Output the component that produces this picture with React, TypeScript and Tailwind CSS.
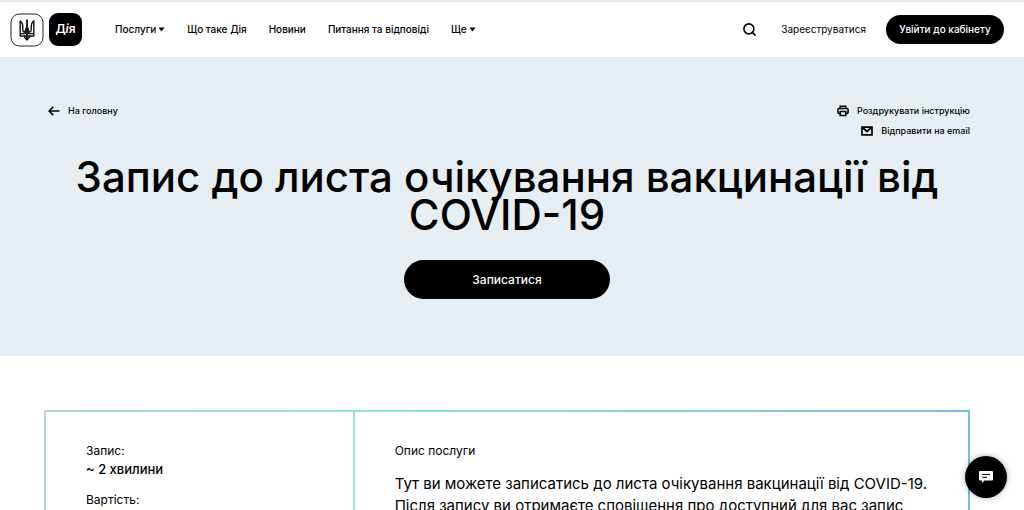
import { Search } from "lucide-react"

type NavItem = {
  label: string
  hasMenu?: boolean
}

const navItems: NavItem[] = [
  { label: "Послуги", hasMenu: true },
  { label: "Що таке Дія" },
  { label: "Новини" },
  { label: "Питання та відповіді" },
  { label: "Ще", hasMenu: true },
]

function Caret() {
  return (
    <svg width="7" height="5" viewBox="0 0 7 5" fill="currentColor" aria-hidden="true">
      <path d="M0.4 0.4h6.2L3.5 4.6z" />
    </svg>
  )
}

function TridentLogo() {
  return (
    <svg className="size-8.5" viewBox="0 0 34 34" fill="none" aria-hidden="true">
      <rect x="1" y="1" width="32" height="32" rx="8.5" stroke="#222" strokeWidth="1" />
      <g stroke="#111" strokeWidth="1.4" strokeLinejoin="round">
        <path d="M10.2 7.8v15.200h3.800c.4 1.600 1.500 2.400 3 4 1.500-1.600 2.600-2.400 3-4h3.800V7.800c-2 1.700-2.700 3.900-2.600 6.700.1 2.200.3 3.700-.7 4.300" />
        <path d="M10.200 7.800c2 1.700 2.700 3.900 2.600 6.700-.1 2.200-.3 3.700.7 4.300 1.600.2 2.300-1.500 2.600-4.300M20.500 18.800c-1.600.2-2.300-1.500-2.600-4.300" />
        <path d="M10.200 20.600h13.600M14 23h6M14.200 20.600c.6-1.200 2.200-1.700 2.800-3.400.6 1.700 2.200 2.200 2.800 3.400" />
        <path d="M17 6.500V27" strokeWidth="1.800" />
      </g>
    </svg>
  )
}

function BackIcon() {
  return (
    <svg width="12" height="10" viewBox="0 0 12 10" fill="none" stroke="#000" strokeWidth="1.500" aria-hidden="true">
      <path d="M11.500 5H1.200M5.200 0.900L1.100 5l4.100 4.100" />
    </svg>
  )
}

function PrinterIcon() {
  return (
    <svg width="12" height="12" viewBox="0 0 12 12" fill="none" stroke="#000" strokeWidth="1.500" aria-hidden="true">
      <path d="M3.200 3.300V1.200h5.600v2.100M3.200 8.500H1.800L.9 7.600V4.300l.9-.9h8.400l.9.900v3.300l-.9.900H8.800" />
      <path d="M3.200 6.600h5.600v3.900H3.200z" />
    </svg>
  )
}

function MailIcon() {
  return (
    <svg width="12" height="10" viewBox="0 0 12 10" fill="none" stroke="#000" strokeWidth="1.700" aria-hidden="true">
      <path d="M1 1.100h10v7.800H1z" />
      <path d="M1.500 1.500L6 5.500l4.500-4" />
    </svg>
  )
}

function Header() {
  return (
    <header className="flex h-[57px] shrink-0 items-center border-t-2 border-[#e4e5e6] bg-white pr-5 pl-2.5">
      <a href="#" aria-label="Дія" className="flex items-center gap-[5px]">
        <TridentLogo />
        <span className="flex size-[33px] items-center justify-center rounded-[9px] bg-black pb-0.5 text-xs font-semibold text-white">
          <span>
            Д<i>і</i>я
          </span>
        </span>
      </a>

      <nav className="ml-[33px] flex items-center gap-[22px] font-medium">
        {navItems.map(({ label, hasMenu }) =>
          hasMenu ? (
            <button key={label} type="button" className="flex items-center gap-0.5">
              {label}
              <Caret />
            </button>
          ) : (
            <a key={label} href="#">
              {label}
            </a>
          )
        )}
      </nav>

      <div className="ml-auto flex items-center">
        <button type="button" aria-label="Пошук">
          <Search size={15} strokeWidth={2.500} />
        </button>
        <a href="#" className="ml-6">
          Зареєструватися
        </a>
        <a
          href="#"
          className="ml-5 flex h-[29px] w-[118px] items-center justify-center rounded-full bg-black font-medium text-white"
        >
          Увійти до кабінету
        </a>
      </div>
    </header>
  )
}

function Hero() {
  return (
    <section className="shrink-0 bg-[#e6edf3] pt-[46px] pr-[54px] pb-[57px] pl-11">
      <div className="flex items-start justify-between text-[9px] leading-4 font-medium">
        <a href="#" className="flex items-center gap-2 pl-1">
          <BackIcon />
          На головну
        </a>
        <div className="flex flex-col items-end gap-1">
          <button type="button" className="flex items-center gap-2">
            <PrinterIcon />
            Роздрукувати інструкцію
          </button>
          <button type="button" className="flex items-center gap-2">
            <MailIcon />
            Відправити на email
          </button>
        </div>
      </div>

      <h1 className="mt-[19px] text-center text-[42px] leading-[38px] font-medium">
        Запис до листа очікування вакцинації від COVID-19
      </h1>

      <button
        type="button"
        className="mx-auto mt-[26px] block h-[39px] w-[206px] rounded-full bg-black text-xs font-medium text-white"
      >
        Записатися
      </button>
    </section>
  )
}

function ServiceCard() {
  return (
    <section className="mt-[54px] mr-[54px] ml-11 shrink-0">
      {/* The gradient shows through the padding and the gap as the card lines */}
      <div className="grid grid-cols-[1fr_2fr] gap-0.5 bg-linear-to-r from-[#b5d8cb] via-[#8eecc6] via-33% to-[#7bbcd9] p-0.5">
        <dl className="bg-white px-10 py-[31px] text-xs leading-4">
          <dt>Запис:</dt>
          <dd className="mt-0.5 text-[13px] font-medium">~ 2 хвилини</dd>
          <dt className="mt-[15px]">Вартість:</dt>
        </dl>
        <div className="bg-white px-10 py-[31px]">
          <h2 className="text-xs leading-4">Опис послуги</h2>
          <p className="mt-[14px] text-[15px] leading-[22px]">
            Тут ви можете записатись до листа очікування вакцинації від COVID-19. Після запису ви
            отримаєте сповіщення про доступний для вас запис
          </p>
        </div>
      </div>
    </section>
  )
}

function ChatButton() {
  return (
    <button
      type="button"
      aria-label="Чат"
      className="fixed right-[17px] bottom-3 flex size-[42px] items-center justify-center rounded-full bg-black shadow-[0_0_6px_rgba(0,0,0,0.3)]"
    >
      <svg width="14" height="12" viewBox="0 0 14 12" aria-hidden="true">
        <path d="M1 0h12a1 1 0 0 1 1 1v7.500a1 1 0 0 1-1 1H5.500L3 12V9.500H1a1 1 0 0 1-1-1V1a1 1 0 0 1 1-1z" fill="#fff" />
        <path d="M3 3.500h8M3 6.200h5" stroke="#000" strokeWidth="1.100" />
      </svg>
    </button>
  )
}

export default function App() {
  return (
    <div className="flex h-screen flex-col overflow-hidden bg-white font-['Inter','Liberation_Sans',sans-serif] text-[10px] text-black">
      <Header />
      <main className="flex flex-col">
        <Hero />
        <ServiceCard />
      </main>
      <ChatButton />
    </div>
  )
}
